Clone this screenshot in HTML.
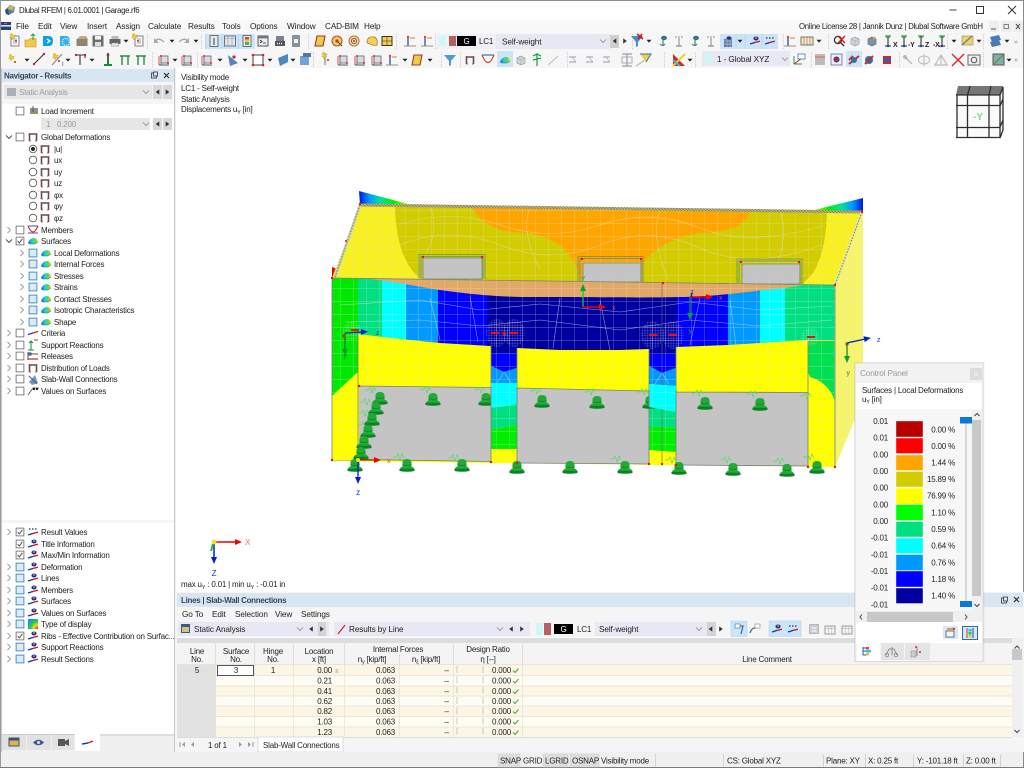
<!DOCTYPE html>
<html><head><meta charset="utf-8"><title>Dlubal RFEM | 6.01.0001 | Garage.rf6</title>
<style>
html,body{margin:0;padding:0;background:#fff;width:1024px;height:768px;overflow:hidden}
svg{display:block;position:absolute;left:0;top:0;filter:blur(.3px)}
text{font-family:"Liberation Sans",sans-serif;font-size:8px;fill:#222;letter-spacing:-.2px;white-space:pre}
.m{font-size:8.2px;letter-spacing:-.1px}
.g{fill:#9a9a9a}
.b{font-weight:bold;letter-spacing:-.3px;fill:#3a4654}
.c{text-anchor:middle}
.r{text-anchor:end}
.s{font-size:5.5px}
</style></head><body>
<svg width="1024" height="768" viewBox="0 0 1024 768" xmlns="http://www.w3.org/2000/svg">
<defs>
<pattern id="mesh" width="13" height="13" patternUnits="userSpaceOnUse" x="2" y="2"><path d="M13 0H0V13" fill="none" stroke="#e6e6e6" stroke-width=".7" opacity=".6"/></pattern>
<pattern id="fine" width="2.6" height="2.6" patternUnits="userSpaceOnUse"><path d="M2.6 0H0V2.6" fill="none" stroke="#fff" stroke-width=".5" opacity=".6"/></pattern>
<pattern id="hatch" width="3" height="3" patternUnits="userSpaceOnUse"><path d="M0 0L3 3" stroke="#4d7a70" stroke-width=".7"/></pattern>
<linearGradient id="gt" x1="0" y1="0" x2="1" y2="0"><stop offset="0" stop-color="#0018e0"/><stop offset=".2" stop-color="#0099ff"/><stop offset=".4" stop-color="#00e0a0"/><stop offset=".65" stop-color="#00ee00"/><stop offset="1" stop-color="#f7f030"/></linearGradient>
<linearGradient id="gr" x1="1" y1="0" x2="0" y2="0"><stop offset="0" stop-color="#0018e0"/><stop offset=".2" stop-color="#0099ff"/><stop offset=".4" stop-color="#00e0a0"/><stop offset=".65" stop-color="#00ee00"/><stop offset="1" stop-color="#f7f030"/></linearGradient>
<linearGradient id="gl" x1="0" y1="0" x2="1" y2="0"><stop offset="0" stop-color="#e80000"/><stop offset=".45" stop-color="#ffa500"/><stop offset="1" stop-color="#f0e020"/></linearGradient>
<linearGradient id="glr" x1="1" y1="0" x2="0" y2="0"><stop offset="0" stop-color="#e80000"/><stop offset=".45" stop-color="#ffa500"/><stop offset="1" stop-color="#f0e020"/></linearGradient>
<linearGradient id="sf" x1="0" y1="0" x2="1" y2="0"><stop offset="0" stop-color="#1060e0"/><stop offset=".4" stop-color="#20d0e0"/><stop offset=".7" stop-color="#50e040"/><stop offset="1" stop-color="#f0c020"/></linearGradient>
<radialGradient id="td" cx="1" cy="1" r="1.2"><stop offset="0" stop-color="#e02020"/><stop offset=".35" stop-color="#f0e000"/><stop offset=".6" stop-color="#30d040"/><stop offset="1" stop-color="#1090f0"/></radialGradient>
<marker id="mr" markerWidth="7" markerHeight="6" refX="1" refY="3" orient="auto" markerUnits="userSpaceOnUse"><path d="M0 0L7 3L0 6Z" fill="#f00000"/></marker>
<marker id="mg" markerWidth="7" markerHeight="6" refX="1" refY="3" orient="auto" markerUnits="userSpaceOnUse"><path d="M0 0L7 3L0 6Z" fill="#08a030"/></marker>
<marker id="mb" markerWidth="7" markerHeight="6" refX="1" refY="3" orient="auto" markerUnits="userSpaceOnUse"><path d="M0 0L7 3L0 6Z" fill="#0020d0"/></marker>
<clipPath id="beam"><path d="M332 278L835 285V340L808 340L760 343L728 345L676 347L649 349L620 350L560 350L517 348L490 346L440 343L400 339L358 334V372L332 396Z"/></clipPath>

<g id="chk"><rect x="-3.9" y="-3.9" width="7.8" height="7.8" fill="#fff" stroke="#666" stroke-width=".8"/></g>
<g id="chv"><rect x="-3.9" y="-3.9" width="7.8" height="7.8" fill="#fff" stroke="#666" stroke-width=".8"/><path d="M-2.4 0L-.7 2L2.4-2.2" fill="none" stroke="#444" stroke-width=".9"/></g>
<g id="chb"><rect x="-3.9" y="-3.9" width="7.8" height="7.8" fill="#dcebf8" stroke="#3e86bd" stroke-width=".9"/></g>
<g id="rad"><circle r="3.8" fill="#fff" stroke="#555" stroke-width=".8"/></g>
<g id="rad1"><circle r="3.8" fill="#fff" stroke="#555" stroke-width=".8"/><circle r="2" fill="#222"/></g>
<path id="cr" d="M-1.5-3L1.5 0L-1.5 3" fill="none" stroke="#999" stroke-width=".9"/>
<path id="cd" d="M-3-1.5L0 1.5L3-1.5" fill="none" stroke="#444" stroke-width=".9"/>
<path id="chev" d="M-3-1.5L0 1.5L3-1.5" fill="none" stroke="#888" stroke-width=".8"/>
<path id="dn" d="M-2.5-1.2H2.5L0 1.6Z" fill="#222"/>
<g id="fr"><path d="M-3.5 4V-3H3.5V4" fill="none" stroke="#555" stroke-width="1.6"/><circle cx="-3.5" cy="-3" r=".9" fill="#d03030"/><circle cx="3.5" cy="-3" r=".9" fill="#d03030"/><path d="M-3.5 4h1.4M3.5 4h-1.4" stroke="#d03030" stroke-width="1"/></g>
<g id="sfi"><path d="M-5 2Q-3-3 1-3Q4-3 5 1L2 3H-3Z" fill="url(#sf)"/><path d="M-5 2L-3 3H2L5 1" fill="none" stroke="#2060a0" stroke-width=".5"/></g>
<g id="ey"><ellipse cx="1" cy="-2.5" rx="2.6" ry="2" fill="#30307a"/><circle cx="1" cy="-3" r="1" fill="#9090c0"/><path d="M-5 3L0 1.4" stroke="#1040b0" stroke-width="1.4"/><path d="M0 1.4L5 .2" stroke="#d02020" stroke-width="1.4"/></g>
<g id="xl"><path d="M-5 3L0 1.4" stroke="#1040b0" stroke-width="1.4"/><path d="M0 1.4L5 .2" stroke="#d02020" stroke-width="1.4"/><path d="M-4-3h1.5M-1-3h1.5M2-3h1.5" stroke="#333" stroke-width="1.3"/></g>
<g id="ln"><path d="M-5 1.5L0 0" stroke="#1040b0" stroke-width="1.4"/><path d="M0 0L5-1.5" stroke="#d02020" stroke-width="1.4"/></g>
<g id="st"><path d="M-1-5L0-2.5L2.5-3L.8-1L2-.5L0 0L-1 2L-1.6 0L-3.5-.5L-2-1.5L-3-3.5Z" fill="#f0d020" stroke="#b08010" stroke-width=".3"/><circle cx="3" cy="3" r="1" fill="#d02020"/></g>
<g id="dc"><rect x="-4" y="-5" width="8" height="10" fill="#fafafa" stroke="#667" stroke-width=".8"/><path d="M-2-2h4M-2 0h4M-2 2h4" stroke="#889" stroke-width=".7"/></g>
<g id="fo"><path d="M-6 5V-2H-2L-1-3.5H5V5Z" fill="#f4c64a" stroke="#b89030" stroke-width=".6"/></g>
<g id="bd"><path d="M-5-5H1Q5-5 5 0Q5 5 1 5H-5Z" fill="#10a0e8"/><path d="M-1-2L2 0L-1 2" fill="none" stroke="#fff" stroke-width="1.2"/></g>
<g id="bg"><path d="M-5-5H1Q5-5 5 0V5H-5Z" fill="#35b0ea"/><circle cx="1" cy="1" r="3.6" fill="none" stroke="#e0f4ff" stroke-width="1.4" stroke-dasharray="1.2 1"/></g>
<g id="bx"><rect x="-5.5" y="-2" width="11" height="7" fill="#8f8373"/><path d="M-5-2L-2-5H4L6-2Z" fill="#b9ad9d"/><rect x="-1" y="-4" width="6" height="2" fill="#d8a060"/></g>
<g id="fl"><rect x="-5.5" y="-5.5" width="11" height="11" fill="#6e6e6e"/><rect x="-3" y="-5" width="6" height="3.6" fill="#f4f4f4"/><rect x="-3" y="1" width="6" height="4" fill="#ddd"/></g>
<g id="pr"><rect x="-5.5" y="-2" width="11" height="5" fill="#666"/><rect x="-3.5" y="-5" width="7" height="3" fill="#bbb"/><rect x="-3.5" y="2" width="7" height="3" fill="#eee" stroke="#777" stroke-width=".5"/></g>
<g id="un"><path d="M-5 0Q-1-4 4 1" fill="none" stroke="#a8a8a8" stroke-width="1.4"/><path d="M-6-3V2H-1Z" fill="#a8a8a8"/></g>
<g id="re"><path d="M5 0Q1-4-4 1" fill="none" stroke="#a8a8a8" stroke-width="1.4"/><path d="M6-3V2H1Z" fill="#a8a8a8"/></g>
<g id="w1"><rect x="-4" y="-5.5" width="8" height="11" fill="#e8e8e8" stroke="#5c6670" stroke-width=".9"/><rect x="-1" y="-3" width="2" height="7" fill="#8a949e"/></g>
<g id="w2"><rect x="-5.5" y="-5" width="11" height="10" fill="#e8e8e8" stroke="#5c6670" stroke-width=".9"/><path d="M-5-2.5h10M-2-5v10M2-5v10" stroke="#8a949e" stroke-width=".6"/></g>
<g id="w3"><rect x="-4" y="-5.5" width="8" height="11" fill="#e8e8e8" stroke="#5c6670" stroke-width=".9"/><rect x="-2" y="-4" width="4" height="2.6" fill="#e04040"/><rect x="-2" y="-1.4" width="4" height="2.6" fill="#e8d020"/><rect x="-2" y="1.2" width="4" height="2.6" fill="#30b050"/></g>
<g id="w4"><rect x="-5" y="-5" width="10" height="10" fill="#eee" stroke="#3e4650" stroke-width=".9"/><rect x="-5" y="-5" width="10" height="2.4" fill="#6a7680"/><path d="M-3-1L-1 .5L-3 2M0 2h3" fill="none" stroke="#222" stroke-width=".8"/></g>
<g id="w5"><rect x="-4" y="-5" width="8" height="5" fill="#7a8490"/><rect x="-5" y="0" width="10" height="5" fill="#555"/><path d="M-3 2.5h6" stroke="#fff" stroke-width="1.4" stroke-dasharray="1 1"/></g>
<g id="w6"><rect x="-3.5" y="-5.5" width="7" height="11" fill="#8a949e" stroke="#5c6670" stroke-width=".6"/><rect x="-2" y="-2" width="4" height="4" fill="#eee"/></g>
<g id="y1"><path d="M-3-5H5L3 5H-5Z" fill="#e8d040" stroke="#b03030" stroke-width="1.1"/></g>
<g id="y2"><circle r="5" fill="#f4d060" stroke="#c04030" stroke-width="1"/><circle r="1.6" fill="#c04030"/><path d="M0 0L5 5" stroke="#555" stroke-width="1.2"/></g>
<g id="y3"><circle r="5" fill="#f6e6b0" stroke="#a07040" stroke-width="1"/><circle r="2.6" fill="none" stroke="#c04030"/><circle r="1" fill="#555"/></g>
<g id="y4"><path d="M-5 0Q-4-5 2-4Q6-3 5 4Q1 5-2 3Q-5 3-5 0Z" fill="#f4d050" stroke="#907030" stroke-width=".7"/></g>
<g id="y5"><rect x="-5" y="-4.5" width="10" height="9" fill="#f4d050" stroke="#222" stroke-width=".9"/><path d="M0-4.5v9M-5 0h10" stroke="#222" stroke-width=".5"/></g>
<g id="l1"><path d="M-2 5V-4" stroke="#1040b0" stroke-width="1.2"/><path d="M-6 5H6" stroke="#888" stroke-width=".9"/><path d="M0-3H5" stroke="#d08030" stroke-width="1"/><circle cx="-2" cy="-4" r="1.2" fill="#e04040"/></g>
<g id="fil"><path d="M-6-5H6L1 1V5L-1 6V1Z" fill="#3f8fd0"/><path d="M-1-5L5 0M4-5L0 0" stroke="#d81010" stroke-width="1.5" transform="translate(1,-2)"/></g>
<g id="fil2"><path d="M-6-5H6L1 1V5L-1 6V1Z" fill="#4f9bd8"/></g>
<g id="ey1"><ellipse cx="1" cy="-3" rx="3" ry="2.2" fill="#3a6a9a"/><path d="M0-1V5" stroke="#3fa050" stroke-width="1.3"/><path d="M-3 3Q0 6 2 3" fill="none" stroke="#3a6a9a"/></g>
<g id="xu"><path d="M0-3V5" stroke="#889" stroke-width="1"/><path d="M-4-4h1.6M-1-4h1.6M2-4h1.6M-3 5h6" stroke="#778" stroke-width="1"/></g>
<g id="gd"><rect x="-4" y="-3" width="8" height="8" fill="#5c7a9c"/><path d="M-4-1h8M-4 2h8M-1-3v8M2-3v8" stroke="#cde" stroke-width=".5"/><ellipse cx="1" cy="-4" rx="2.6" ry="1.6" fill="#30307a"/></g>
<g id="cube"><path d="M-4-2L0-4L4-2V3L0 5L-4 3Z" fill="#d0d4d8" stroke="#9aa2aa" stroke-width=".7"/><path d="M-4-2L0 0L4-2M0 0V5" fill="none" stroke="#9aa2aa" stroke-width=".5"/></g>
<g id="cube2"><path d="M-4-2L0-4L4-2V3L0 5L-4 3Z" fill="#7f93aa" stroke="#556" stroke-width=".6"/><circle cx="2" cy="-3" r="1.4" fill="#e0a030"/></g>
<g id="ax"><path d="M0-5V5M-3 5H3" stroke="#1a1a1a" stroke-width="1"/><path d="M-3-5H3" stroke="#30a040" stroke-width="1.3"/><path d="M0-5L-2-3M0-5L2-3" stroke="#30a040" stroke-width=".8"/><circle cy="5" r="1.2" fill="#1040c0"/></g>
<g id="res"><rect x="-4.5" y="-4.5" width="9" height="9" fill="#c8ccd0" stroke="#99a" stroke-width=".6"/><path d="M-2.5-1h5M-2.5 2h5" stroke="#fff" stroke-width=".9"/></g>
<g id="tb"><rect x="-5" y="-3" width="10" height="8" fill="#f4f4f4" stroke="#888" stroke-width=".8"/><path d="M-5-.5h10M-1.5-3v8M1.8-3v8" stroke="#aaa" stroke-width=".5"/></g>
<g id="sp"><path d="M-5-3h7" stroke="#99a" stroke-width="1"/><path d="M-5 2h7" stroke="#99a" stroke-width="1"/><path d="M-2-3L2 2" stroke="#aab" stroke-width=".7"/></g>
<g id="sup"><path d="M-7.500 6Q-7.500 2.500-4.500 1.500L-4.500-2Q-4.500-6 0-6Q4.500-6 4.500-2L4.500 1.500Q7.500 2.500 7.500 6Z" fill="#22aa36"/><path d="M-7.500 3.800H7.500V6Q0 7.500-7.500 6Z" fill="#0c8024"/><path d="M-4.500-.5Q0 1.500 4.500-.5" stroke="#0c8024" fill="none" stroke-width=".8"/></g>
<path id="spr" d="M0 0H3L5-3L7 3L9-3L11 1" fill="none" stroke="#53dc69" stroke-width=".7"/>
<g id="pu"><path d="M-5-4V5M-3-2V5" stroke="#d03030" stroke-width=".8"/><path d="M-5 5H5" stroke="#505a66" stroke-width="1"/><rect x="-3" y="-4" width="7" height="7" fill="#d8dde2" stroke="#5c6670" stroke-width=".8"/><circle cx="-3" cy="-4" r="1" fill="#e02020"/><circle cx="4" cy="3" r="1" fill="#e02020"/></g>
<path id="tri" d="M1.8-2.6V2.6L-1.8 0Z" fill="#333"/>
<path id="tril" d="M-1.8-2.6V2.6L1.8 0Z" fill="#333"/>
</defs>

<!-- window background -->
<rect width="1024" height="768" fill="#f0f0f0"/>
<rect width="1024" height="20" fill="#fff"/>
<rect width="1024" height="1" fill="#8e8e8e"/>
<rect y="20" width="1024" height="13" fill="#f8f8f8"/>
<rect y="33" width="1024" height="35" fill="#f6f6f6"/>
<rect x="176" y="68" width="848" height="525" fill="#fff"/>
<rect x="1023" width="1" height="768" fill="#8a8a8a"/>
<rect x="0" width="1" height="768" fill="#9a9a9a"/>

<!-- title -->
<g transform="translate(10,10)"><path d="M-4 4L-5 0L0-5L5-3L4 2L-1 5Z" fill="#4f7fa8"/><path d="M-1-5L4-3L3 1L-2-1Z" fill="#d0b060"/><path d="M-4 4L-5 0L-2-1L-1 5Z" fill="#30506e"/></g>
<text x="19" y="13" style="font-size:7.8px;letter-spacing:-.3px">Dlubal RFEM | 6.01.0001 | Garage.rf6</text>
<path d="M949.5 10H956.5" stroke="#444" stroke-width="1"/>
<rect x="976.5" y="6.5" width="7" height="7" fill="none" stroke="#333" stroke-width="1"/>
<path d="M1008 6L1016 14M1016 6L1008 14" stroke="#333" stroke-width="1"/>

<!-- menu -->
<rect x="1" y="22" width="10" height="8" fill="#27417c"/><rect x="1" y="25" width="10" height="1.6" fill="#dde"/><rect x="4" y="23" width="3" height="1" fill="#e05050"/>
<text class="m" x="16" y="29">File</text><text class="m" x="38" y="29">Edit</text><text class="m" x="60" y="29">View</text><text class="m" x="87" y="29">Insert</text><text class="m" x="116" y="29">Assign</text><text class="m" x="148" y="29">Calculate</text><text class="m" x="188" y="29">Results</text><text class="m" x="222" y="29">Tools</text><text class="m" x="250" y="29">Options</text><text class="m" x="287" y="29">Window</text><text class="m" x="325" y="29">CAD-BIM</text><text class="m" x="364" y="29">Help</text>
<text x="799" y="29" style="font-size:7.8px;letter-spacing:-.26px">Online License 28 | Jannik Dunz | Dlubal Software GmbH</text>
<g fill="#eee"><rect x="989" y="21" width="10" height="11"/><rect x="1001" y="21" width="11" height="11"/><rect x="1013" y="21" width="10" height="11"/></g>
<path d="M991 29h5" stroke="#555"/><rect x="1004" y="24.5" width="4.5" height="4" fill="none" stroke="#666" stroke-width=".8"/><path d="M1016 24L1020 29M1020 24L1016 29" stroke="#333" stroke-width=".9"/>

<!-- toolbar 1 -->
<rect x="205" y="34" width="50" height="15" fill="#cce4f7"/>
<path d="M205.500 34V49M222 34V49M238.500 34V49" stroke="#a8d0ee" stroke-width=".6"/>
<rect x="720" y="34" width="58" height="15" fill="#cce4f7"/>
<path d="M736 34V49M745 34V49M762 34V49" stroke="#a8d0ee" stroke-width=".6"/>
<use href="#dc" x="15" y="41"/><use href="#st" x="13" y="38"/><use href="#fo" x="31" y="42"/><path d="M33 34v6M31 36l2-2l2 2" stroke="#2aa040" fill="none"/><use href="#bd" x="48" y="41"/><use href="#bg" x="65" y="41"/><use href="#bx" x="82" y="41"/><use href="#fl" x="98" y="41"/><use href="#pr" x="115" y="41"/><use href="#dn" x="126" y="41"/><use href="#dc" x="139" y="41"/><use href="#st" x="135" y="38"/>
<use href="#un" x="160" y="41"/><use href="#dn" x="172" y="41"/><use href="#re" x="183" y="41"/><use href="#dn" x="196" y="41"/>
<use href="#w1" x="214" y="41"/><use href="#w2" x="230" y="41"/><use href="#w3" x="247" y="41"/><use href="#w4" x="263" y="41"/><use href="#w5" x="280" y="41"/><use href="#w6" x="296" y="41"/>
<use href="#y1" x="320" y="41"/><use href="#y2" x="337" y="41"/><use href="#y3" x="354" y="41"/><use href="#y4" x="372" y="41"/><use href="#y5" x="387" y="41"/>
<use href="#l1" x="410" y="41"/><use href="#l1" x="427" y="41"/>
<path d="M147.500 34V49M201.500 34V49M308.500 34V49M396.500 34V49M435.500 34V49M632.500 34V49M783.500 34V49M828.500 34V49M947.500 34V49M983.500 34V49" stroke="#ccc" stroke-dasharray="1 1"/>
<rect x="437" y="34" width="59" height="15" fill="#f0f0f6"/>
<rect x="439" y="36" width="7" height="10" fill="#ccf8f8"/><rect x="449" y="36" width="7" height="10" fill="#b86060"/><rect x="457" y="36" width="19" height="10" fill="#000"/>
<text x="466.500" y="44" class="c" style="fill:#fff">G</text><text x="479" y="44">LC1</text>
<rect x="496" y="34" width="114" height="15" fill="#e8e8f4"/><text x="502" y="44.500" class="m">Self-weight</text><use href="#chev" x="603" y="41"/>
<rect x="610" y="35" width="9" height="13" fill="#cfcfcf"/><use href="#tri" x="614.500" y="41"/><use href="#tril" x="625" y="41"/>
<use href="#fil" x="637" y="41"/><use href="#dn" x="649" y="41"/><use href="#ey1" x="663" y="41"/><use href="#xu" x="679" y="41"/><use href="#ey1" x="695" y="41"/><use href="#xu" x="711" y="41"/>
<use href="#gd" x="728" y="42"/><use href="#dn" x="740" y="41"/><use href="#ey" x="755" y="41"/><use href="#xl" x="770" y="41"/>
<use href="#l1" x="790" y="41"/><rect x="801" y="37" width="12" height="8" fill="#f4e8c8" stroke="#555" stroke-width=".8"/><path d="M804 37v8M807 37v8M810 37v8" stroke="#b04040" stroke-width=".5"/><use href="#dn" x="819" y="41"/>
<circle cx="838" cy="40" r="3.6" fill="none" stroke="#333" stroke-width="1.3"/><path d="M841 43L844 46" stroke="#333" stroke-width="1.3"/><path d="M838 36L845 43M845 36L838 43" stroke="#e01010" stroke-width="1.3"/>
<use href="#cube" x="855" y="41"/><use href="#cube2" x="872" y="41"/>
<use href="#ax" x="888" y="41"/><text x="893" y="47" style="font-size:7px;font-weight:bold">X</text><use href="#ax" x="904" y="41"/><text x="908" y="47" style="font-size:7px;font-weight:bold">-Y</text><use href="#ax" x="921" y="41"/><text x="925" y="47" style="font-size:7px;font-weight:bold">Z</text><use href="#ax" x="942" y="41"/><text x="933" y="47" style="font-size:7px;font-weight:bold">-X</text>
<use href="#dn" x="954" y="41"/>
<rect x="962" y="36" width="11" height="9" fill="#e8d468" stroke="#888" stroke-width=".6"/><path d="M962 45L972 36" stroke="#666"/><use href="#dn" x="979" y="41"/>
<path d="M990 37L999 35L1001 40L992 42Z" fill="#3f7fc0"/><path d="M990 42L999 40L1001 45L992 47Z" fill="#507aa8"/><use href="#dn" x="1007" y="41"/>
<text x="1014" y="44" style="fill:#888;font-size:7px">»</text>

<!-- toolbar 2 -->
<use href="#st" x="12" y="59"/><use href="#dn" x="27" y="60"/><path d="M34 64L44 54" stroke="#333" stroke-width="1.1"/><circle cx="34" cy="64" r="1.2" fill="#d02020"/><circle cx="44" cy="54" r="1.2" fill="#d02020"/>
<path d="M52 65L62 54" stroke="#888" stroke-width="1.1"/><use href="#st" x="56" y="58"/><text x="62" y="66" style="font-size:6px;fill:#2050a0">I</text><use href="#dn" x="68" y="60"/>
<path d="M76 55H85V58M80 55V65" stroke="#333" stroke-width="1.1" fill="none"/><circle cx="76" cy="55" r="1.2" fill="#d02020"/><circle cx="85" cy="55" r="1.2" fill="#d02020"/><use href="#dn" x="92" y="60"/>
<path d="M108 53V64M104 65H112" stroke="#1a8a3a" stroke-width="2" fill="none"/><circle cx="108" cy="55" r="1.4" fill="#d02020"/>
<path d="M120 56H130M122 56V65M128 56V65M136 56H146M138 56V65M144 56V65" stroke="#2a8a4a" stroke-width="1.4" fill="none"/>
<use href="#pu" x="164" y="60"/><use href="#dn" x="175" y="60"/><use href="#pu" x="187" y="60"/>
<use href="#pu" x="207" y="60"/><use href="#dn" x="220" y="60"/><path d="M228 55L238 63L230 66Z" fill="#4f86c0"/><circle cx="234" cy="57" r="1.6" fill="#d02020"/><use href="#dn" x="245" y="60"/>
<rect x="253" y="55" width="10" height="10" fill="#fff" stroke="#444"/><circle cx="253" cy="55" r="1.3" fill="#e02020"/><circle cx="263" cy="55" r="1.3" fill="#e02020"/><circle cx="253" cy="65" r="1.3" fill="#e02020"/><circle cx="263" cy="65" r="1.3" fill="#e02020"/><use href="#dn" x="270" y="60"/>
<path d="M278 58L288 54V62L280 66Z" fill="#4f86c0"/><use href="#dn" x="293" y="60"/>
<path d="M300 56H309V65H300Z" fill="#6fa4d4"/><rect x="303" y="53" width="8" height="4" fill="#4f77a8"/>
<path d="M325 53V65" stroke="#889" stroke-width="1.2"/><use href="#st" x="325" y="57"/>
<use href="#pu" x="343" y="60"/><use href="#pu" x="360" y="60"/><use href="#pu" x="377" y="60"/><use href="#l1" x="392" y="60"/><use href="#dn" x="405" y="60"/><use href="#y1" x="417" y="60"/><use href="#dn" x="430" y="60"/>
<use href="#fil2" x="450" y="60"/>
<use href="#fr" x="470" y="60"/><path d="M482 55Q488 70 494 55" fill="none" stroke="#d02020"/><path d="M482 55h12" stroke="#2050b0"/>
<rect x="497" y="51" width="16" height="16" fill="#cce4f7"/><use href="#sfi" x="505" y="60"/>
<use href="#cube" x="521" y="60"/><path d="M533 56L537 54V66M541 56L537 54M533 60L541 58" stroke="#1a9a3a" fill="none" stroke-width="1.2"/><path d="M548 65L558 56" stroke="#bbb"/>
<use href="#sp" x="574" y="60"/><use href="#sp" x="591" y="60"/><use href="#sp" x="608" y="60"/><path d="M622 54h10M622 66h10M627 54v12" stroke="#889" fill="none"/><rect x="622" y="57" width="10" height="6" fill="none" stroke="#aab"/><path d="M636 66L648 58" stroke="#aab"/><path d="M640 54H651L646 62" fill="#f0d040" stroke="#3070c0"/>
<path d="M673 54V66H685Z" fill="#e02020"/><path d="M673 66L685 54" stroke="#f0d020" stroke-width="2"/><path d="M673 60L680 66" stroke="#30c0e0" stroke-width="2"/><use href="#dn" x="690" y="60"/>
<rect x="702" y="51" width="88" height="15" fill="#e8e8f4"/><rect x="705" y="54" width="7" height="9" fill="#ccf8f8"/><text x="717" y="62" class="m">1 - Global XYZ</text><use href="#chev" x="785" y="59"/>
<path d="M794 64H802M794 64V56" stroke="#20a040"/><path d="M794 64L802 58" stroke="#d02020"/><rect x="798" y="54" width="7" height="5" fill="#fff" stroke="#3060a0" stroke-width=".7"/>
<rect x="815" y="54" width="10" height="11" fill="#bbb"/><path d="M815 57h10" stroke="#d88" stroke-width="2"/>
<rect x="831" y="54" width="11" height="11" fill="#e8eef4" stroke="#88a"/><circle cx="836.500" cy="59.500" r="2.500" fill="#e02020" stroke="#1040b0"/>
<rect x="846" y="51" width="16" height="16" fill="#cce4f7"/><path d="M849 64L859 56M849 60L853 56" stroke="#c03030" stroke-width="2"/><circle cx="854" cy="60" r="3" fill="#3070b0"/>
<circle cx="869" cy="60" r="4" fill="#3070b0"/><path d="M865 64L873 56" stroke="#c03030" stroke-width="2"/><rect x="883" y="56" width="8" height="8" fill="#c03030"/><circle cx="887" cy="60" r="2.500" fill="#3060b0"/>
<path d="M904 56L912 64" stroke="#bbb" stroke-width="1.5"/><circle cx="905" cy="57" r="1.400" fill="none" stroke="#aaa"/><ellipse cx="924" cy="60" rx="5.500" ry="4" fill="none" stroke="#bbb"/><path d="M924 54V66" stroke="#bbb"/>
<path d="M941 55L935 65H947Z" fill="none" stroke="#bbb" stroke-width="1.200"/><path d="M941 55V65" stroke="#bbb"/>
<path d="M952 54L964 66M964 54L952 66" stroke="#e02020" stroke-width="1.300"/>
<rect x="968" y="55" width="12" height="10" fill="#f0f0f0" stroke="#666"/><circle cx="974" cy="60" r="2.800" fill="none" stroke="#555"/>
<rect x="993" y="54" width="11" height="11" fill="#8aa" stroke="#555"/><path d="M994 64L1003 55" stroke="#50a050" stroke-width="1.500"/><use href="#dn" x="1009" y="60"/><text x="1014" y="62" style="fill:#888;font-size:7px">»</text>
<path d="M152.500 52V67M197.500 52V67M313.500 52V67M441.500 52V67M460.500 52V67M567.500 52V67M664.500 52V67M695.500 52V67M811.500 52V67M899.500 52V67M983.500 52V67" stroke="#ccc" stroke-dasharray="1 1"/>

<!-- navigator -->
<rect x="1" y="68" width="174" height="684" fill="#f5f5f5"/>
<rect x="2" y="69" width="172" height="13" fill="#d8e6f3"/>
<text x="4" y="78.500" class="b">Navigator - Results</text>
<rect x="151.500" y="73" width="5" height="5" fill="none" stroke="#333" stroke-width=".8"/><rect x="153.500" y="72" width="4" height="4" fill="#d8e6f3" stroke="#333" stroke-width=".8"/>
<path d="M164 73L169 78M169 73L164 78" stroke="#222"/>
<rect x="4" y="85" width="148" height="14" fill="#e6e6e6"/><rect x="7" y="88" width="9" height="8" fill="#aab0b8"/><text x="19" y="95" class="g">Static Analysis</text><use href="#chev" x="146" y="92"/>
<rect x="153" y="85" width="9" height="14" fill="#d8d8d8"/><rect x="163" y="85" width="9" height="14" fill="#d8d8d8"/><use href="#tri" x="157.500" y="92"/><use href="#tril" x="167.500" y="92"/>
<rect x="2" y="104" width="172" height="416" fill="#fff"/>
<rect x="2" y="523" width="172" height="211" fill="#fff"/>
<rect x="174" y="68" width="1" height="684" fill="#c8c8c8"/>
<rect x="1" y="68" width="1" height="684" fill="#c8c8c8"/>
<use href="#chk" x="20" y="111"/><rect x="30" y="108" width="8" height="6" fill="#9a8f70"/><path d="M33 106v6" stroke="#3060a0"/><text x="41" y="114">Load Increment</text>
<rect x="41" y="118" width="109" height="12" fill="#e6e6e6"/><text x="46" y="127" class="g">1</text><text x="57" y="127" class="g">0.200</text><use href="#chev" x="146" y="124"/><rect x="153" y="118" width="9" height="12" fill="#d8d8d8"/><rect x="163" y="118" width="9" height="12" fill="#d8d8d8"/><use href="#tri" x="157.500" y="124"/><use href="#tril" x="167.500" y="124"/>

<use href="#cd" x="9" y="137"/><use href="#chk" x="20" y="137"/><use href="#fr" x="33" y="137"/><text x="41" y="140">Global Deformations</text>
<use href="#rad1" x="33" y="149"/><use href="#fr" x="45" y="149"/><text x="54" y="152">|u|</text>
<use href="#rad" x="33" y="160"/><use href="#fr" x="45" y="160"/><text x="54" y="163">ux</text>
<use href="#rad" x="33" y="172"/><use href="#fr" x="45" y="172"/><text x="54" y="175">uy</text>
<use href="#rad" x="33" y="183"/><use href="#fr" x="45" y="183"/><text x="54" y="186">uz</text>
<use href="#rad" x="33" y="195"/><use href="#fr" x="45" y="195"/><text x="54" y="198">φx</text>
<use href="#rad" x="33" y="206"/><use href="#fr" x="45" y="206"/><text x="54" y="209">φy</text>
<use href="#rad" x="33" y="218"/><use href="#fr" x="45" y="218"/><text x="54" y="221">φz</text>

<use href="#cr" x="9" y="230"/><use href="#chk" x="20" y="230"/><path d="M28 226Q33 238 38 226" fill="none" stroke="#d02020"/><path d="M28 226h10M28 233h10" stroke="#3050b0"/><text x="41" y="233">Members</text>
<use href="#cd" x="9" y="241"/><use href="#chv" x="20" y="241"/><use href="#sfi" x="33" y="241"/><text x="41" y="244">Surfaces</text>

<use href="#cr" x="22" y="253"/><use href="#chb" x="33" y="253"/><use href="#sfi" x="46" y="253"/><text x="54" y="256">Local Deformations</text>
<use href="#cr" x="22" y="264"/><use href="#chb" x="33" y="264"/><use href="#sfi" x="46" y="264"/><text x="54" y="267">Internal Forces</text>
<use href="#cr" x="22" y="276"/><use href="#chb" x="33" y="276"/><use href="#sfi" x="46" y="276"/><text x="54" y="279">Stresses</text>
<use href="#cr" x="22" y="287"/><use href="#chb" x="33" y="287"/><use href="#sfi" x="46" y="287"/><text x="54" y="290">Strains</text>
<use href="#cr" x="22" y="299"/><use href="#chb" x="33" y="299"/><use href="#sfi" x="46" y="299"/><text x="54" y="302">Contact Stresses</text>
<use href="#cr" x="22" y="310"/><use href="#chb" x="33" y="310"/><use href="#sfi" x="46" y="310"/><text x="54" y="313">Isotropic Characteristics</text>
<use href="#cr" x="22" y="322"/><use href="#chb" x="33" y="322"/><use href="#sfi" x="46" y="322"/><text x="54" y="325">Shape</text>

<use href="#cr" x="9" y="333"/><use href="#chk" x="20" y="333"/><use href="#ln" x="33" y="333"/><text x="41" y="336">Criteria</text>
<use href="#cr" x="9" y="345"/><use href="#chk" x="20" y="345"/><path d="M31 341V350M28 350H34M29 343l2-2l2 2" stroke="#1a8a3a" fill="none"/><path d="M34 340h4" stroke="#d02020"/><text x="41" y="348">Support Reactions</text>
<use href="#cr" x="9" y="356"/><use href="#chk" x="20" y="356"/><path d="M28 352V360M28 354h10" stroke="#555"/><path d="M28 359h10" stroke="#b03030" stroke-width="1.200"/><circle cx="30" cy="354" r="1.300" fill="none" stroke="#3060a0"/><text x="41" y="359">Releases</text>
<use href="#cr" x="9" y="368"/><use href="#chk" x="20" y="368"/><use href="#fr" x="33" y="368"/><text x="41" y="371">Distribution of Loads</text>
<use href="#cr" x="9" y="379"/><use href="#chk" x="20" y="379"/><path d="M29 382L35 375L38 383L32 385Z" fill="#6f98c8"/><path d="M29 376L37 384" stroke="#556"/><text x="41" y="382">Slab-Wall Connections</text>
<use href="#cr" x="9" y="391"/><use href="#chk" x="20" y="391"/><path d="M28 395L33 388H39" stroke="#666" fill="none"/><rect x="33" y="388" width="2" height="2" fill="#222"/><rect x="36" y="388" width="2" height="2" fill="#222"/><text x="41" y="394">Values on Surfaces</text>

<!-- lower list -->
<use href="#cr" x="9" y="532"/><use href="#chv" x="20" y="532"/><use href="#xl" x="33" y="532"/><text x="41" y="535">Result Values</text>
<use href="#chv" x="20" y="544"/><use href="#ey" x="33" y="544"/><text x="41" y="547">Title Information</text>
<use href="#chv" x="20" y="555"/><use href="#ey" x="33" y="555"/><text x="41" y="558">Max/Min Information</text>
<use href="#cr" x="9" y="567"/><use href="#chb" x="20" y="567"/><use href="#ey" x="33" y="567"/><text x="41" y="570">Deformation</text>
<use href="#cr" x="9" y="578"/><use href="#chb" x="20" y="578"/><use href="#ey" x="33" y="578"/><text x="41" y="581">Lines</text>
<use href="#cr" x="9" y="590"/><use href="#chb" x="20" y="590"/><use href="#ey" x="33" y="590"/><text x="41" y="593">Members</text>
<use href="#cr" x="9" y="601"/><use href="#chb" x="20" y="601"/><use href="#ey" x="33" y="601"/><text x="41" y="604">Surfaces</text>
<use href="#cr" x="9" y="613"/><use href="#chb" x="20" y="613"/><use href="#ey" x="33" y="613"/><text x="41" y="616">Values on Surfaces</text>
<use href="#cr" x="9" y="624"/><use href="#chb" x="20" y="624"/><rect x="28" y="619" width="10" height="10" fill="url(#td)"/><text x="41" y="627">Type of display</text>
<use href="#cr" x="9" y="636"/><use href="#chv" x="20" y="636"/><use href="#ey" x="33" y="636"/><text x="41" y="639">Ribs - Effective Contribution on Surfac...</text>
<use href="#cr" x="9" y="647"/><use href="#chb" x="20" y="647"/><use href="#ey" x="33" y="647"/><text x="41" y="650">Support Reactions</text>
<use href="#cr" x="9" y="659"/><use href="#chb" x="20" y="659"/><use href="#ey" x="33" y="659"/><text x="41" y="662">Result Sections</text>

<!-- nav tabs -->
<rect x="2" y="734" width="172" height="18" fill="#f0f0f0"/>
<rect x="2" y="735" width="24" height="15" fill="#e2e2e2"/><rect x="27" y="735" width="24" height="15" fill="#e2e2e2"/><rect x="52" y="735" width="22" height="15" fill="#e2e2e2"/><rect x="75" y="733" width="25" height="18" fill="#fff"/>
<path d="M100.500 735H174" stroke="#ccc"/><path d="M2 734.500H75" stroke="#ccc"/>
<rect x="9" y="738" width="10" height="8" fill="#e8b040" stroke="#35557a"/><rect x="9" y="738" width="10" height="2.500" fill="#35557a"/>
<path d="M33 742.500Q38.500 737 44 742.500Q38.500 748 33 742.500Z" fill="#3a5a8a"/><circle cx="38.500" cy="742.500" r="1.500" fill="#dde"/>
<rect x="58" y="739" width="7" height="7" fill="#555"/><path d="M65 741L69 739V746L65 744Z" fill="#555"/>
<path d="M82 744L88 743" stroke="#1040b0" stroke-width="1.400"/><path d="M88 743L93 741" stroke="#d02020" stroke-width="1.400"/>

<!-- view info text -->
<text x="181" y="80">Visibility mode</text>
<text x="181" y="91">LC1 - Self-weight</text>
<text x="181" y="102">Static Analysis</text>
<text x="181" y="112">Displacements u<tspan class="s" dy="2">Y</tspan><tspan dy="-2"> [in]</tspan></text>

<!-- cube -->
<path d="M958 86H1003L1000 95H956Z" fill="#767676"/>
<path d="M956 95H1000V138H956Z" fill="#fafafa"/>
<path d="M1000 95L1003 87V130L1000 138Z" fill="#f0f0f0"/>
<path d="M957 95V137M967.500 95V138M989 95V138M1000 95V138M956 95H1000M956 105.500H1000M956 127.500H1000M956 137.500H1000M967.500 95L970 86M989 95L991 86M1000 95L1003 87V130L1000 138M1000 106L1003 99M1000 127L1003 120" fill="none" stroke="#2e2e2e" stroke-width="1.300"/>
<text x="978" y="120" class="c" style="fill:#7fdc8a;font-weight:bold;font-size:10px">-Y</text>

<!-- 3D model -->
<path d="M835 285L863 212V400L835 467Z" fill="#f6f46a"/>
<path d="M835 285L863 212V400L835 467Z" fill="url(#mesh)"/>
<path d="M359 191L360 205L412 205Z" fill="url(#gt)"/>
<path d="M863 198L863 212L810 211Z" fill="url(#gr)"/>
<path d="M332 267L332 278L363 278Z" fill="url(#gl)"/>
<path d="M835 275L835 285L803 284Z" fill="url(#glr)"/>
<!-- roof -->
<path d="M360 205L862 212L835 285L332 278Z" fill="#f8f020"/>
<path d="M395 206L827 212C826 240 822 258 813 273L803 284L420 279C405 265 396 245 395 206Z" fill="#d2cc00"/>
<path d="M472 208L750 212C745 225 735 231 700 233C670 238 648 252 643 265L642 283L580 282C578 262 565 240 530 233C500 232 485 228 472 208Z" fill="#ffa500"/>
<path d="M360 205L862 212L835 285L332 278Z" fill="url(#mesh)"/>
<g fill="none" stroke="#e6e6e6" stroke-width=".6" opacity=".55">
<path d="M398 225Q450 208 500 225T600 225T700 228T825 225M400 245Q450 225 500 245T600 245T700 248T822 245M430 206Q440 230 425 255M530 208Q520 230 540 270M660 210Q650 235 668 280M780 211Q790 240 770 282"/>
</g>
<!-- windows -->
<g fill="#c4c4c4" stroke="#6f8f70" stroke-width=".8">
<rect x="423" y="258" width="59" height="21"/>
<path d="M583 263H641V282H583Z"/>
<path d="M742 264H800V284H742Z"/>
</g>
<g fill="none" stroke="#5f8f78" stroke-width=".8">
<path d="M419 278V254.500H485V279M421 278V256.500H483V279"/>
<path d="M578 281V256.500H643V282M580 281V258.500H641V282"/>
<path d="M737 283V259H802V284M739 283V261H800V284"/>
</g>
<path d="M360 205L862 212" stroke="#c8b070" stroke-width="3"/>
<path d="M360 205L862 212" stroke="url(#hatch)" stroke-width="3"/>
<path d="M360 205L335 277" stroke="#cfd6b0" stroke-width="3"/>
<path d="M360 205L335 277" stroke="#5a8078" stroke-width="1" stroke-dasharray="1.500 1.500"/>
<path d="M862 212L835 285" stroke="#e8e8a0" stroke-width="3"/>
<path d="M862 212L835 285" stroke="#5a8078" stroke-width="1" stroke-dasharray="1.500 1.500"/>
<!-- front base -->
<path d="M332 278L835 285V467L332 461Z" fill="#ffff00"/>
<g clip-path="url(#beam)">
<rect x="332" y="270" width="26" height="130" fill="#00e800"/>
<rect x="358" y="270" width="24" height="80" fill="#00e080"/>
<rect x="382" y="270" width="24" height="80" fill="#00ffff"/>
<rect x="406" y="270" width="32" height="90" fill="#0099ff"/>
<rect x="438" y="270" width="49" height="90" fill="#0000ff"/>
<rect x="487" y="270" width="190" height="90" fill="#0000a0"/>
<rect x="677" y="270" width="51" height="90" fill="#0000ff"/>
<rect x="728" y="270" width="32" height="90" fill="#0099ff"/>
<rect x="760" y="270" width="25" height="90" fill="#00ffff"/>
<rect x="785" y="270" width="50" height="90" fill="#00e080"/>
</g>
<path d="M332 278H358V368C345 372 335 382 332 396Z" fill="#00e800"/>
<path d="M808 341H835V402C832 390 822 380 810 377L808 372Z" fill="#00e050"/>
<path d="M785 290L835 285V340H785Z" fill="#00e080"/>
<!-- mid piers -->
<rect x="491" y="345" width="26" height="118" fill="#ffff00"/>
<rect x="491" y="345" width="26" height="10" fill="#0000a0"/>
<path d="M491 353H517V368L504 372L491 366Z" fill="#0000ff"/>
<path d="M491 366L504 372L517 368V383H491Z" fill="#0099ff"/>
<path d="M491 383H517V404L491 408Z" fill="#00ffff"/>
<path d="M491 408L517 404V425L491 430Z" fill="#00e080"/>
<path d="M491 430L517 425V449H491Z" fill="#00ee00"/>
<rect x="649" y="347" width="27" height="118" fill="#ffff00"/>
<rect x="649" y="347" width="27" height="10" fill="#0000a0"/>
<path d="M649 354H676V368L662 373L649 366Z" fill="#0000ff"/>
<path d="M649 366L662 373L676 368V386L649 384Z" fill="#0099ff"/>
<path d="M649 384L676 386V412L649 407Z" fill="#00ffff"/>
<path d="M649 407L676 412V428L649 426Z" fill="#00e080"/>
<path d="M649 426L676 428V452L649 450Z" fill="#00ee00"/>
<!-- doors -->
<g fill="#c4c4c4">
<path d="M359 386L491 387.500V461.500L359 459.500Z"/>
<path d="M517 388L649 391V463.500L517 463Z"/>
<path d="M676 392L808 392.500V466L676 465Z"/>
</g>
<path d="M332 278H835V467H808V392H676V465H649V391H517V463H491V387H359V460H332Z" fill="url(#mesh)"/>
<g fill="none" stroke="#d8d8e8" stroke-width=".6" opacity=".7">
<path d="M340 305L420 300L480 310L540 304L620 312L690 302L760 310L832 306"/>
<path d="M345 322L420 320L480 326L540 320L620 330L690 320L760 326L832 320"/>
<path d="M430 298L440 340M470 296L478 342M560 298L553 348M600 300L610 350M700 298L690 345M730 300L736 345"/>
<path d="M504 372L497 383M504 372L511 383M662 373L655 384M662 373L669 384"/>
</g>
<!-- dense mesh clusters -->
<ellipse cx="497" cy="333" rx="11" ry="14" fill="url(#fine)"/>
<ellipse cx="514" cy="333" rx="11" ry="14" fill="url(#fine)"/>
<ellipse cx="652" cy="335" rx="11" ry="14" fill="url(#fine)"/>
<ellipse cx="673" cy="335" rx="11" ry="14" fill="url(#fine)"/>
<circle cx="810" cy="337" r="9" fill="url(#fine)"/>
<circle cx="352" cy="331" r="9" fill="url(#fine)"/>
<!-- tan band -->
<path d="M363 278L803 285C790 288 775 289 763 290C735 294 700 297 680 297C640 298 600 297 520 297C480 296 445 291 427 288C400 283 380 280 363 278Z" fill="#e2a868"/>
<path d="M363 278L803 285C790 288 775 289 763 290C735 294 700 297 680 297C640 298 600 297 520 297C480 296 445 291 427 288C400 283 380 280 363 278Z" fill="url(#mesh)"/>
<path d="M332 278L835 285" stroke="#7a8a70" stroke-width=".8"/>
<path d="M662 283V465" stroke="#667" stroke-width=".6"/>
<g fill="none" stroke="#77807a" stroke-width=".8">
<path d="M358 334V460M359 386L491 387.500M491 345V463M517 348V463M517 388L649 391M649 349V464M676 347V466M676 392L808 392.500M808 341V467M835 285V467M332 278V461"/>
<path d="M359 459.500L491 461.500M517 463L649 464M676 465L808 466"/>
</g>
<path d="M332 461L358 460" stroke="#999" stroke-width=".6"/>

<!-- springs -->
<use href="#spr" x="365" y="390"/><use href="#spr" x="360" y="402"/><use href="#spr" x="358" y="413"/><use href="#spr" x="358" y="425"/>
<use href="#spr" x="420" y="390"/><use href="#spr" x="474" y="390"/><use href="#spr" x="530" y="391"/><use href="#spr" x="584" y="392"/><use href="#spr" x="637" y="392"/><use href="#spr" x="692" y="393"/><use href="#spr" x="746" y="394"/><use href="#spr" x="800" y="396"/>
<use href="#spr" x="393" y="457"/><use href="#spr" x="448" y="458"/><use href="#spr" x="610" y="459"/><use href="#spr" x="665" y="460"/><use href="#spr" x="720" y="460"/><use href="#spr" x="773" y="461"/><use href="#spr" x="803" y="457"/>
<!-- supports -->
<use href="#sup" x="380" y="398"/><use href="#sup" x="376" y="408"/><use href="#sup" x="372" y="419"/><use href="#sup" x="368" y="431"/><use href="#sup" x="364" y="442"/><use href="#sup" x="361" y="453"/>
<use href="#sup" x="433" y="399"/><use href="#sup" x="486" y="399"/><use href="#sup" x="542" y="401"/><use href="#sup" x="597" y="402"/><use href="#sup" x="650" y="402"/><use href="#sup" x="705" y="403"/><use href="#sup" x="760" y="404"/>
<path d="M491 383H517V404L491 408Z" fill="#00ffff"/><path d="M649 384L676 386V412L649 407Z" fill="#00ffff"/>
<path d="M491 383H517V404L491 408Z" fill="url(#mesh)"/><path d="M649 384L676 386V412L649 407Z" fill="url(#mesh)"/>
<path d="M491 387V408M517 387V404M649 390V407M676 390V412" stroke="#77807a" stroke-width=".8"/>
<use href="#sup" x="355" y="465"/><use href="#sup" x="407" y="465"/><use href="#sup" x="462" y="465"/><use href="#sup" x="517" y="467"/><use href="#sup" x="570" y="467"/><use href="#sup" x="625" y="467"/><use href="#sup" x="679" y="468"/><use href="#sup" x="733" y="469"/><use href="#sup" x="787" y="470"/><use href="#sup" x="817" y="467"/>
<!-- red dots -->
<g fill="#f01010">
<circle cx="360" cy="204" r="1.200"/><circle cx="346" cy="241" r="1"/><circle cx="332" cy="278" r="1.200"/><circle cx="423" cy="257" r="1.200"/><circle cx="482" cy="257" r="1.200"/><circle cx="582" cy="259" r="1.200"/><circle cx="641" cy="259" r="1.200"/><circle cx="741" cy="262" r="1.200"/><circle cx="799" cy="262" r="1.200"/><circle cx="663" cy="283" r="1.200"/><circle cx="835" cy="285" r="1.200"/><circle cx="862" cy="212" r="1.200"/><circle cx="332" cy="460" r="1.200"/><circle cx="359" cy="386" r="1.200"/><circle cx="491" cy="462" r="1.200"/><circle cx="517" cy="463" r="1.200"/><circle cx="649" cy="464" r="1.200"/><circle cx="662" cy="464" r="1.200"/><circle cx="676" cy="465" r="1.200"/><circle cx="808" cy="467" r="1.200"/><circle cx="835" cy="467" r="1.200"/>
<rect x="491" y="332" width="8" height="2"/><rect x="510" y="332" width="8" height="2"/><rect x="503" y="332" width="3" height="3"/><rect x="649" y="334" width="8" height="2"/><rect x="669" y="334" width="8" height="2"/><rect x="807" y="336" width="8" height="2"/><rect x="351" y="329" width="8" height="2"/>
<circle cx="344" cy="336" r="1.600"/><circle cx="847" cy="344" r="1.600"/>
</g>
<!-- axes -->
<g fill="none" stroke-width="1.300">
<path d="M345 333L362 332" stroke="#0020d0" marker-end="url(#mb)"/>
<path d="M345 333V350" stroke="#1a7a30" marker-end="url(#mg)"/>
<path d="M583 307V290" stroke="#18c040" marker-end="url(#mg)"/>
<path d="M583 307H600" stroke="#f00000" stroke-width="1.600" marker-end="url(#mr)"/>
<path d="M690 297H707" stroke="#f00000" stroke-width="1.600" marker-end="url(#mr)"/>
<path d="M690 297V314" stroke="#0a9030" marker-end="url(#mg)"/>
<path d="M691 297L692 293" stroke="#0020d0" stroke-width="1.500"/>
<path d="M847 343L865 339" stroke="#0020d0" marker-end="url(#mb)"/>
<path d="M847 343V357" stroke="#0a9030" marker-end="url(#mg)"/>
<path d="M358 460H375" stroke="#f00000" marker-end="url(#mr)"/>
<path d="M358 462V478" stroke="#0020d0" marker-end="url(#mb)"/>
<path d="M214 542H236" stroke="#f00000" stroke-width="1.500" marker-end="url(#mr)"/>
<path d="M214 542V558" stroke="#0020d0" stroke-width="1.500" marker-end="url(#mb)"/>
</g>
<circle cx="358" cy="460" r="2" fill="#f0e020"/>
<circle cx="214" cy="542" r="2.400" fill="#f0e020"/><path d="M213 544L211 551" stroke="#20c030" stroke-width="2"/>
<text x="376" y="335" style="font-size:7px;fill:#2030d0">z</text>
<text x="345" y="358" class="c" style="font-size:7px;fill:#1a7a30">y</text>
<text x="583" y="280" class="c" style="font-size:7px;fill:#20b040">y</text>
<text x="612" y="310" style="font-size:7px;fill:#e04040">x</text>
<text x="692" y="294" class="c" style="font-size:7px;fill:#2030d0">z</text>
<text x="719" y="300" style="font-size:7px;fill:#e04040">x</text>
<text x="690" y="333" class="c" style="font-size:7px;fill:#1a9a30">y</text>
<text x="877" y="342" style="font-size:7px;fill:#2030d0">z</text>
<text x="848" y="375" class="c" style="font-size:7px;fill:#1a9a30">y</text>
<text x="387" y="463" style="font-size:7px;fill:#e04040">x</text>
<text x="358" y="495" class="c" style="font-size:8px;fill:#2030d0">z</text>
<text x="245" y="545" style="font-size:8px;fill:#e07070">X</text>
<text x="214" y="576" class="c" style="font-size:8px;fill:#2030d0">Z</text>
<text x="181" y="587">max u<tspan class="s" dy="2">Y</tspan><tspan dy="-2"> : 0.01 | min u</tspan><tspan class="s" dy="2">Y</tspan><tspan dy="-2"> : -0.01 in</tspan></text>

<!-- bottom panel -->
<rect x="175" y="592" width="849" height="160" fill="#f5f5f5"/>
<rect x="177" y="593" width="846" height="14" fill="#d8e6f3"/>
<text x="181" y="603" class="b">Lines | Slab-Wall Connections</text>
<rect x="1001.500" y="598" width="5" height="5" fill="none" stroke="#333" stroke-width=".8"/><rect x="1003.500" y="597" width="4" height="4" fill="#d8e6f3" stroke="#333" stroke-width=".8"/>
<path d="M1014 597L1019 602M1019 597L1014 602" stroke="#222"/>
<text class="m" x="182" y="617">Go To</text><text class="m" x="212" y="617">Edit</text><text class="m" x="235" y="617">Selection</text><text class="m" x="275" y="617">View</text><text class="m" x="301" y="617">Settings</text>

<rect x="178" y="622" width="151" height="14" fill="#e8e8f4"/><rect x="181" y="624" width="9" height="9" fill="#3a5a8a"/><rect x="182" y="627" width="7" height="5" fill="#e0c070"/><text x="194" y="632" class="m">Static Analysis</text><use href="#chev" x="300" y="629"/><use href="#tri" x="311" y="629"/><rect x="318" y="622" width="8" height="14" fill="#d4d4d4"/><use href="#tril" x="322" y="629"/>
<rect x="334" y="622" width="196" height="14" fill="#e8e8f4"/><path d="M338 634L345 625" stroke="#d02020" stroke-width="1.200"/><text x="349" y="632" class="m">Results by Line</text><use href="#chev" x="500" y="629"/><use href="#tri" x="511" y="629"/><use href="#tril" x="522" y="629"/>
<rect x="536" y="623" width="7" height="12" fill="#ccf8f8"/><rect x="544" y="623" width="7" height="12" fill="#b86060"/><rect x="554" y="624" width="19" height="10" fill="#000"/><text x="563.500" y="632" class="c" style="fill:#fff">G</text><text x="577" y="632">LC1</text>
<rect x="595" y="622" width="112" height="14" fill="#e8e8f4"/><text x="599" y="632" class="m">Self-weight</text><use href="#chev" x="699" y="629"/><rect x="707" y="622" width="9" height="14" fill="#d4d4d4"/><use href="#tri" x="710.500" y="629"/><use href="#tril" x="721" y="629"/>
<rect x="731" y="621" width="16" height="16" fill="#cce4f7" stroke="#a8d0ee" stroke-width=".5"/><path d="M737 626L743 626L741 634" fill="none" stroke="#3a6a9a" stroke-width="1.200"/><rect x="735" y="624" width="5" height="4" fill="#fff" stroke="#3a6a9a" stroke-width=".6"/>
<path d="M750 633Q752 627 756 628" fill="none" stroke="#3a6a9a" stroke-width="1.200"/><rect x="755" y="624" width="5" height="4" fill="#fff" stroke="#888" stroke-width=".6"/>
<rect x="769" y="621" width="32" height="16" fill="#cce4f7" stroke="#a8d0ee" stroke-width=".5"/><use href="#ey" x="777" y="629"/><use href="#xl" x="793" y="629"/>
<use href="#res" x="814" y="629"/><use href="#tb" x="830" y="629"/><use href="#tb" x="847" y="629"/>

<!-- table -->
<rect x="177" y="637" width="835" height="100" fill="#fff"/>
<rect x="177" y="638" width="835" height="5" fill="#dcdcdc"/>
<rect x="177" y="643" width="835" height="22" fill="#f4f4f4"/>
<g fill="#fdf6e4">
<rect x="216" y="665" width="796" height="10"/><rect x="216" y="686" width="796" height="10"/><rect x="216" y="706" width="796" height="10"/><rect x="216" y="727" width="796" height="10"/>
</g>
<g fill="#fffcf4">
<rect x="216" y="675.500" width="796" height="10"/><rect x="216" y="696" width="796" height="10"/><rect x="216" y="716.500" width="796" height="10"/>
</g>
<rect x="177" y="665" width="39" height="72" fill="#e2e2e2"/>
<path d="M216 675.500H1012M216 686H1012M216 696H1012M216 706H1012M216 716.500H1012M216 727H1012M177 664.500H1012" stroke="#e4e0d0" stroke-width=".7"/>
<path d="M215.500 638V737M254.500 638V737M293.500 638V737M344.500 638V737M399.500 654V737M453.500 638V737M522.500 638V737" stroke="#e8e4d4" stroke-width=".8"/>
<path d="M215.500 638V665M254.500 638V665M293.500 638V665M344.500 638V665M399.500 654V665M453.500 638V665M522.500 638V665" stroke="#ddd" stroke-width=".8"/>
<text class="c" x="197" y="654">Line</text><text class="c" x="197" y="662">No.</text><text class="c" x="236" y="654">Surface</text><text class="c" x="236" y="662">No.</text><text class="c" x="273" y="654">Hinge</text><text class="c" x="273" y="662">No.</text><text class="c" x="319" y="654">Location</text><text class="c" x="319" y="662">x [ft]</text><text class="c" x="398" y="652">Internal Forces</text><text class="c" x="372" y="662">n<tspan class="s" dy="1.500">y</tspan><tspan dy="-1.500"> [kip/ft]</tspan></text><text class="c" x="426" y="662">n<tspan class="s" dy="1.500">ξ</tspan><tspan dy="-1.500"> [kip/ft]</tspan></text><text class="c" x="488" y="652">Design Ratio</text><text class="c" x="488" y="662">η [--]</text><text class="c" x="767" y="662">Line Comment</text>
<rect x="217.500" y="665.500" width="36" height="10" fill="#fff" stroke="#444" stroke-width=".9"/>
<text class="c" x="197" y="673">5</text><text class="c" x="236" y="673">3</text><text class="c" x="273" y="673">1</text>
<text class="r" x="332" y="673">0.00</text><text x="335" y="673" style="font-size:6px;fill:#888">≡</text><text class="r" x="395" y="673">0.063</text><text class="r" x="449" y="673">--</text><text class="r" x="511" y="673">0.000</text>
<text class="r" x="332" y="683.500">0.21</text><text class="r" x="395" y="683.500">0.063</text><text class="r" x="449" y="683.500">--</text><text class="r" x="511" y="683.500">0.000</text>
<text class="r" x="332" y="694">0.41</text><text class="r" x="395" y="694">0.063</text><text class="r" x="449" y="694">--</text><text class="r" x="511" y="694">0.000</text>
<text class="r" x="332" y="704">0.62</text><text class="r" x="395" y="704">0.063</text><text class="r" x="449" y="704">--</text><text class="r" x="511" y="704">0.000</text>
<text class="r" x="332" y="714">0.82</text><text class="r" x="395" y="714">0.063</text><text class="r" x="449" y="714">--</text><text class="r" x="511" y="714">0.000</text>
<text class="r" x="332" y="724.500">1.03</text><text class="r" x="395" y="724.500">0.063</text><text class="r" x="449" y="724.500">--</text><text class="r" x="511" y="724.500">0.000</text>
<text class="r" x="332" y="735">1.23</text><text class="r" x="395" y="735">0.063</text><text class="r" x="449" y="735">--</text><text class="r" x="511" y="735">0.000</text>
<path d="M457 666V736M483 666V736" stroke="#aaa" stroke-width=".6" stroke-dasharray="7 3.300"/>
<path fill="none" stroke="#3aaa3a" stroke-width="1" d="M513 670.500L515 672.500L518.500 668.500M513 681L515 683L518.500 679M513 691.500L515 693.500L518.500 689.500M513 701.500L515 703.500L518.500 699.500M513 711.500L515 713.500L518.500 709.500M513 722L515 724L518.500 720M513 732.500L515 734.500L518.500 730.500"/>
<!-- table scrollbar -->
<rect x="1012" y="638" width="11" height="99" fill="#f0f0f0"/>
<path d="M1014.500 648.500L1017 646L1019.500 648.500M1014.500 730L1017 732.500L1019.500 730" fill="none" stroke="#444"/>
<rect x="1012" y="649" width="10" height="11" fill="#c8c8c8"/>
<!-- table tabs -->
<rect x="177" y="737" width="846" height="15" fill="#f5f5f5"/>
<path d="M177 737.500H1012" stroke="#ddd"/>
<g fill="#999"><path d="M180 742v5" stroke="#999"/><path d="M185 742v5l-3-2.500Z"/><path d="M194 742v5l-3-2.500Z"/><path d="M239 742v5l3-2.500Z"/><path d="M248 742v5l3-2.500Z"/><path d="M253 742v5" stroke="#999"/></g>
<text x="208" y="748">1 of 1</text>
<rect x="258" y="737" width="85" height="15" fill="#fff" stroke="#d0d0d0" stroke-width=".7"/><text x="263" y="748">Slab-Wall Connections</text>

<!-- status bar -->
<rect x="1" y="752" width="1022" height="15" fill="#f0f0f0"/>
<rect y="767" width="1024" height="1" fill="#7a7a7a"/>
<rect x="498" y="754" width="22" height="13" fill="#dedede" stroke="#ccc" stroke-width=".5"/><rect x="543" y="754" width="25" height="13" fill="#dedede" stroke="#ccc" stroke-width=".5"/><rect x="570" y="754" width="29" height="13" fill="#dedede" stroke="#ccc" stroke-width=".5"/>
<text x="500" y="763.500">SNAP</text><text x="523" y="763.500">GRID</text><text x="545" y="763.500">LGRID</text><text x="572" y="763.500">OSNAP</text><text x="601" y="763.500">Visibility mode</text><text x="727" y="763.500">CS: Global XYZ</text><text x="826" y="763.500">Plane: XY</text><text x="868" y="763.500">X: 0.25 ft</text><text x="917" y="763.500">Y: -101.18 ft</text><text x="966" y="763.500">Z: 0.00 ft</text>
<path d="M655.500 754V767M723.500 754V767M823.500 754V767M865.500 754V767M913.500 754V767M963.500 754V767M1000.500 754V767" stroke="#d4d4d4"/>

<!-- control panel -->
<rect x="854" y="362" width="130.500" height="300.500" fill="#000" opacity=".05"/>
<rect x="855" y="363" width="128" height="298" fill="#f8f8f8" stroke="#d0d0d0" stroke-width=".8"/>
<rect x="856" y="364" width="126" height="19" fill="#f2f2f2"/>
<text x="860" y="376" style="fill:#9a9a9a;font-size:8.300px">Control Panel</text>
<rect x="970" y="368" width="12" height="12" fill="#dcdcdc"/><path d="M974 372L978 376M978 372L974 376" stroke="#eee"/>
<rect x="856" y="383" width="126" height="26" fill="#fff"/>
<text x="862" y="393">Surfaces | Local Deformations</text>
<text x="862" y="402">u<tspan class="s" dy="1.500">Y</tspan><tspan dy="-1.500"> [in]</tspan></text>
<rect x="856" y="409" width="116" height="202" fill="#f7f7f7"/>
<g stroke="#fff" stroke-width=".4">
<rect x="896" y="421" width="27" height="16" fill="#b80000"/>
<rect x="896" y="438" width="27" height="15.500" fill="#ff0000"/>
<rect x="896" y="455" width="27" height="15.500" fill="#ffa500"/>
<rect x="896" y="471.500" width="27" height="15.500" fill="#d2cc00"/>
<rect x="896" y="488" width="27" height="16" fill="#ffff00"/>
<rect x="896" y="504.500" width="27" height="16" fill="#00ff00"/>
<rect x="896" y="521.500" width="27" height="15.500" fill="#00e080"/>
<rect x="896" y="538" width="27" height="15.500" fill="#00ffff"/>
<rect x="896" y="554.500" width="27" height="16" fill="#0099ff"/>
<rect x="896" y="571" width="27" height="16" fill="#0000ff"/>
<rect x="896" y="588" width="27" height="15.500" fill="#0000a0"/>
</g>
<text class="r" x="888" y="424">0.01</text><text class="r" x="888" y="440.500">0.01</text><text class="r" x="888" y="457.500">0.00</text><text class="r" x="888" y="474">0.00</text><text class="r" x="888" y="490.500">0.00</text><text class="r" x="888" y="507.500">0.00</text><text class="r" x="888" y="524">0.00</text><text class="r" x="888" y="540.500">-0.01</text><text class="r" x="888" y="557.500">-0.01</text><text class="r" x="888" y="574">-0.01</text><text class="r" x="888" y="590.500">-0.01</text><text class="r" x="888" y="607.500">-0.01</text>
<text class="r" x="955" y="432.500">0.00 %</text><text class="r" x="955" y="449">0.00 %</text><text class="r" x="955" y="465.500">1.44 %</text><text class="r" x="955" y="482">15.89 %</text><text class="r" x="955" y="498.500">76.99 %</text><text class="r" x="955" y="515.500">1.10 %</text><text class="r" x="955" y="532">0.59 %</text><text class="r" x="955" y="548.500">0.64 %</text><text class="r" x="955" y="565.500">0.76 %</text><text class="r" x="955" y="582">1.18 %</text><text class="r" x="955" y="598.500">1.40 %</text>
<rect x="965" y="420" width="2" height="184" fill="#d8d8d8"/>
<rect x="960" y="417" width="12" height="6.500" fill="#0a78d8"/>
<rect x="960" y="601" width="12" height="6" fill="#0a78d8"/>
<rect x="972" y="410" width="10" height="201" fill="#f0f0f0"/>
<rect x="972" y="420" width="9" height="176" fill="#c8c8c8"/>
<path d="M974.500 416L977 413.500L979.500 416M974.500 604L977 606.500L979.500 604" fill="none" stroke="#444"/>
<rect x="856" y="611" width="126" height="11" fill="#f0f0f0"/>
<rect x="867" y="612" width="86" height="10" fill="#c8c8c8"/>
<path d="M862 614.500L860 617L862 619.500M965 614.500L967 617L965 619.500" fill="none" stroke="#444"/>
<rect x="856" y="622" width="126" height="21" fill="#fff"/>
<rect x="943" y="626" width="15" height="13" fill="#d4e8f8"/>
<rect x="946" y="631" width="8" height="6" fill="#f4f4f4" stroke="#556" stroke-width=".8"/><rect x="947" y="628" width="6" height="3" fill="#c8a070"/><circle cx="954" cy="629" r="1.200" fill="#d04040"/>
<rect x="962.500" y="626.500" width="15" height="13" fill="#d4e8f8" stroke="#3a6a9a"/>
<path d="M967 628V638" stroke="#d04040"/><path d="M973 628V638" stroke="#2040b0"/><rect x="968.500" y="629" width="3" height="2.500" fill="#30c0e0"/><rect x="968.500" y="632" width="3" height="2.500" fill="#30c040"/><rect x="968.500" y="635" width="3" height="2.500" fill="#e0d020"/>
<rect x="856" y="643" width="126" height="18" fill="#f4f4f4"/>
<rect x="857" y="642" width="23" height="19" fill="#fff"/>
<rect x="881" y="643" width="23" height="17" fill="#e4e4e4"/>
<rect x="905" y="643" width="25" height="17" fill="#e4e4e4"/>
<path d="M863 647V655M863 648H866M863 651H866M863 655H866" stroke="#3050c0"/><rect x="866" y="647" width="3" height="2.500" fill="#e04040"/><rect x="866" y="650" width="5" height="2.500" fill="#30c0e0"/><rect x="866" y="653" width="3" height="2.500" fill="#e0c020"/>
<path d="M886 655L889 649H894L897 655M892 647V655" fill="none" stroke="#777" stroke-width=".8"/><circle cx="887" cy="655" r="1.800" fill="none" stroke="#777" stroke-width=".7"/><circle cx="896" cy="655" r="1.800" fill="none" stroke="#777" stroke-width=".7"/>
<rect x="911" y="651" width="5" height="6" fill="#ccc" stroke="#888" stroke-width=".5"/><path d="M917 647V656" stroke="#889"/><circle cx="916" cy="647" r="1" fill="#d03030"/><circle cx="920" cy="652" r="1" fill="#d03030"/>
</svg>
</body></html>
